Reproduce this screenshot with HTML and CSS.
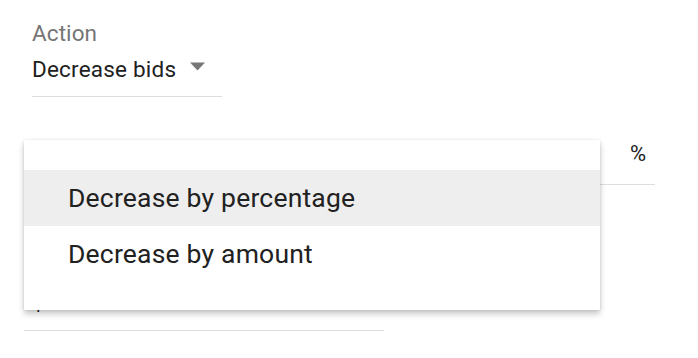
FILE: index.html
```html
<!DOCTYPE html>
<html>
<head>
<meta charset="utf-8">
<link rel="stylesheet" href="styles.css">
</head>
<body>
<div class="page">
  <div class="field-action">
    <div class="label">Action</div>
    <div class="value-row">
      <span class="value">Decrease bids</span>
      <svg class="arrow" width="15" height="30" viewBox="0 0 15 30"><polygon points="0,8.5 15,8.5 7.5,16.5" fill="#777"/></svg>
    </div>
  </div>
  <div class="field-amount">
    <span class="suffix">%</span>
  </div>
  <div class="field-money">
    <span class="prefix">$</span>
  </div>
  <div class="menu">
    <div class="menu-item active">Decrease by percentage</div>
    <div class="menu-item">Decrease by amount</div>
  </div>
</div>
</body>
</html>
```

FILE: styles.css
```css
html, body {
  margin: 0;
  padding: 0;
  background: #ffffff;
}
body {
  font-family: Roboto, "Noto Sans", Arial, sans-serif;
  color: #212121;
}
.page {
  position: relative;
  padding-left: 24px;
  width: 674px;
  height: 358px;
  overflow: hidden;
}
.field-action {
  margin-left: 8px;
  width: 190px;
  padding-top: 20px;
  padding-bottom: 12px;
  border-bottom: 1px solid #dedede;
}
.label {
  font-size: 22.5px;
  line-height: 26px;
  color: #757575;
  letter-spacing: 0.1px;
}
.value-row {
  margin-top: 8px;
  display: flex;
  align-items: center;
  gap: 14px;
  height: 30px;
}
.value {
  font-size: 22.5px;
  line-height: 30px;
  letter-spacing: 0.2px;
  color: #212121;
}
.arrow {
  display: block;
}
.field-amount {
  width: 622px;
  padding: 44px 9px 17px 0;
  display: flex;
  justify-content: flex-end;
  border-bottom: 1px solid #dedede;
}
.suffix {
  font-size: 22px;
  line-height: 26px;
  color: #212121;
}
.field-money {
  width: 352px;
  padding: 105px 0 14px 8px;
  border-bottom: 1px solid #dedede;
}
.prefix {
  display: block;
  font-size: 22px;
  line-height: 26px;
  color: #212121;
}
.menu {
  position: absolute;
  left: 24px;
  top: 140px;
  width: 576px;
  padding: 30px 0 28px;
  background: #ffffff;
  box-shadow: 0 4px 6px rgba(0, 0, 0, 0.22), 0 0 3px rgba(0, 0, 0, 0.10);
}
.menu-item {
  height: 56px;
  line-height: 56px;
  padding-left: 44px;
  font-size: 26.5px;
  letter-spacing: 0.2px;
  color: #212121;
  white-space: nowrap;
}
.menu-item.active {
  background: #eeeeee;
}
```
